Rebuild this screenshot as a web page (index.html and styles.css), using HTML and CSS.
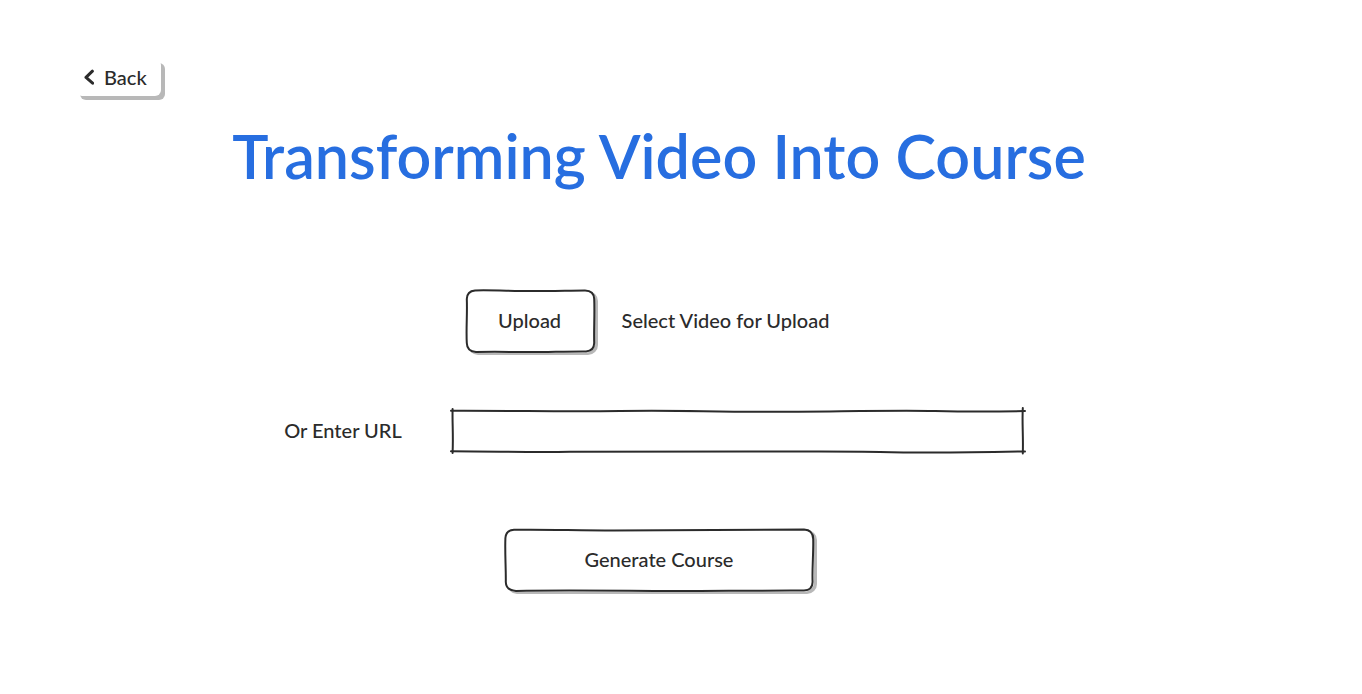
FILE: index.html
```html
<!DOCTYPE html>
<html lang="en">
<head>
<meta charset="utf-8">
<meta name="viewport" content="width=device-width, initial-scale=1">
<title>Transforming Video Into Course</title>
<link rel="stylesheet" href="styles.css">
</head>
<body>
<main class="page">
  <button class="back" type="button">
    <svg class="back-icon" viewBox="0 0 10 16" aria-hidden="true"><path d="M8.4 2.2 2 8.4 8.6 14.2"/></svg>
    Back
  </button>
  <h1 class="title">Transforming Video Into Course</h1>
  <form class="form">
    <div class="row upload-row">
      <button class="sketch upload" type="button" aria-describedby="upload-hint">
        <svg class="outline" viewBox="0 0 130 64" preserveAspectRatio="none" aria-hidden="true"><path d="M10 1.4 C30 1 45 2 66 2 S100 1.6 120 1.4 Q129 1.5 129.2 10 C129.8 25 128.8 40 129.2 54 Q129 62 121 62.4 C100 62.3 85 63 65 63 S30 62.6 11 63 Q2 62.5 1.8 54 C1 40 2.4 25 1.8 10 Q2 2 10 1.4Z"/></svg>
        <span class="label">Upload</span>
      </button>
      <span id="upload-hint">Select Video for Upload</span>
    </div>
    <div class="row url-row">
      <label for="url">Or Enter URL</label>
      <div class="field">
        <svg class="outline" viewBox="0 0 576 46" preserveAspectRatio="none" aria-hidden="true"><path d="M1 2.8 C70 2.6 110 3.8 170 3 S250 3.6 310 3.8 S440 2 485 3 S540 3.8 575 3"/><path d="M1 43.2 C60 43.6 80 44.4 120 43.8 S230 43.6 300 43.6 S400 43.2 430 44 S520 44.6 575 43.4"/><path d="M2.6 1 C2.2 15 3.4 26 2.6 45"/><path d="M572.8 0 C572 15 573.4 30 572.8 45.5"/></svg>
        <input class="input" id="url" type="url">
      </div>
    </div>
    <button class="sketch generate" type="submit">
      <svg class="outline" viewBox="0 0 310 64" preserveAspectRatio="none" aria-hidden="true"><path d="M10 1.8 C40 1.2 70 2.4 110 2.4 S220 1.4 300 1.6 Q309 2 309.2 11 C309.6 25 308 40 308.6 54 Q308.4 62.2 300 62.6 C240 62.4 200 63.4 150 63 S50 62.2 12 63 Q2 62.4 1.8 54 C2 40 .8 25 1.4 10 Q2 2 10 1.8Z"/></svg>
      <span class="label">Generate Course</span>
    </button>
  </form>
</main>
</body>
</html>
```
FILE: styles.css
```css
* { box-sizing: border-box; }

body {
  margin: 0;
  background: #fff;
  color: #2b2b2b;
  font: 500 20px/24px Lato, "Liberation Sans", sans-serif;
}

.page { padding: 59px 120px 48px 76px; }

button {
  font: inherit;
  color: inherit;
  background: #fff;
  border: 0;
  cursor: pointer;
}

.back {
  display: flex;
  align-items: center;
  gap: 10px;
  padding: 6px 14px 7px 8px;
  border-radius: 6px;
  box-shadow: 4px 4px 0 #b8b8b8;
}

.back-icon { width: 10px; height: 16px; }

.back-icon path,
.outline path {
  fill: none;
  stroke: #2b2b2b;
  stroke-width: 2;
  stroke-linecap: round;
  stroke-linejoin: round;
}

.back-icon path { stroke-width: 3; }

.title {
  margin: 20px 0 93px;
  color: #276ee0;
  font-size: 61px;
  line-height: 80px;
  font-weight: 600;
  text-align: center;
}

.form {
  display: flex;
  flex-direction: column;
  align-items: center;
}

.row { display: flex; align-items: center; max-width: 100%; }

.upload-row { gap: 27px; padding-right: 24px; }

.sketch {
  position: relative;
  height: 64px;
  padding: 0 16px 2px;
  border-radius: 10px;
  box-shadow: 3px 2px 0 #b8b8b8;
}

.upload { width: 130px; }

.generate { width: 310px; max-width: 100%; }

.label { position: relative; }

.outline {
  position: absolute;
  inset: 0;
  width: 100%;
  height: 100%;
  overflow: visible;
  pointer-events: none;
}

.outline path { vector-effect: non-scaling-stroke; }

.url-row { gap: 48px; margin: 55px 0 74px; padding-right: 8px; }

.url-row label { padding-bottom: 2px; }

#upload-hint { padding-bottom: 2px; }

.field { position: relative; width: 576px; height: 46px; }

.input {
  width: 100%;
  height: 100%;
  padding: 0 12px;
  border: 0;
  background: transparent;
  color: inherit;
  font: inherit;
  outline: 0;
}
```
